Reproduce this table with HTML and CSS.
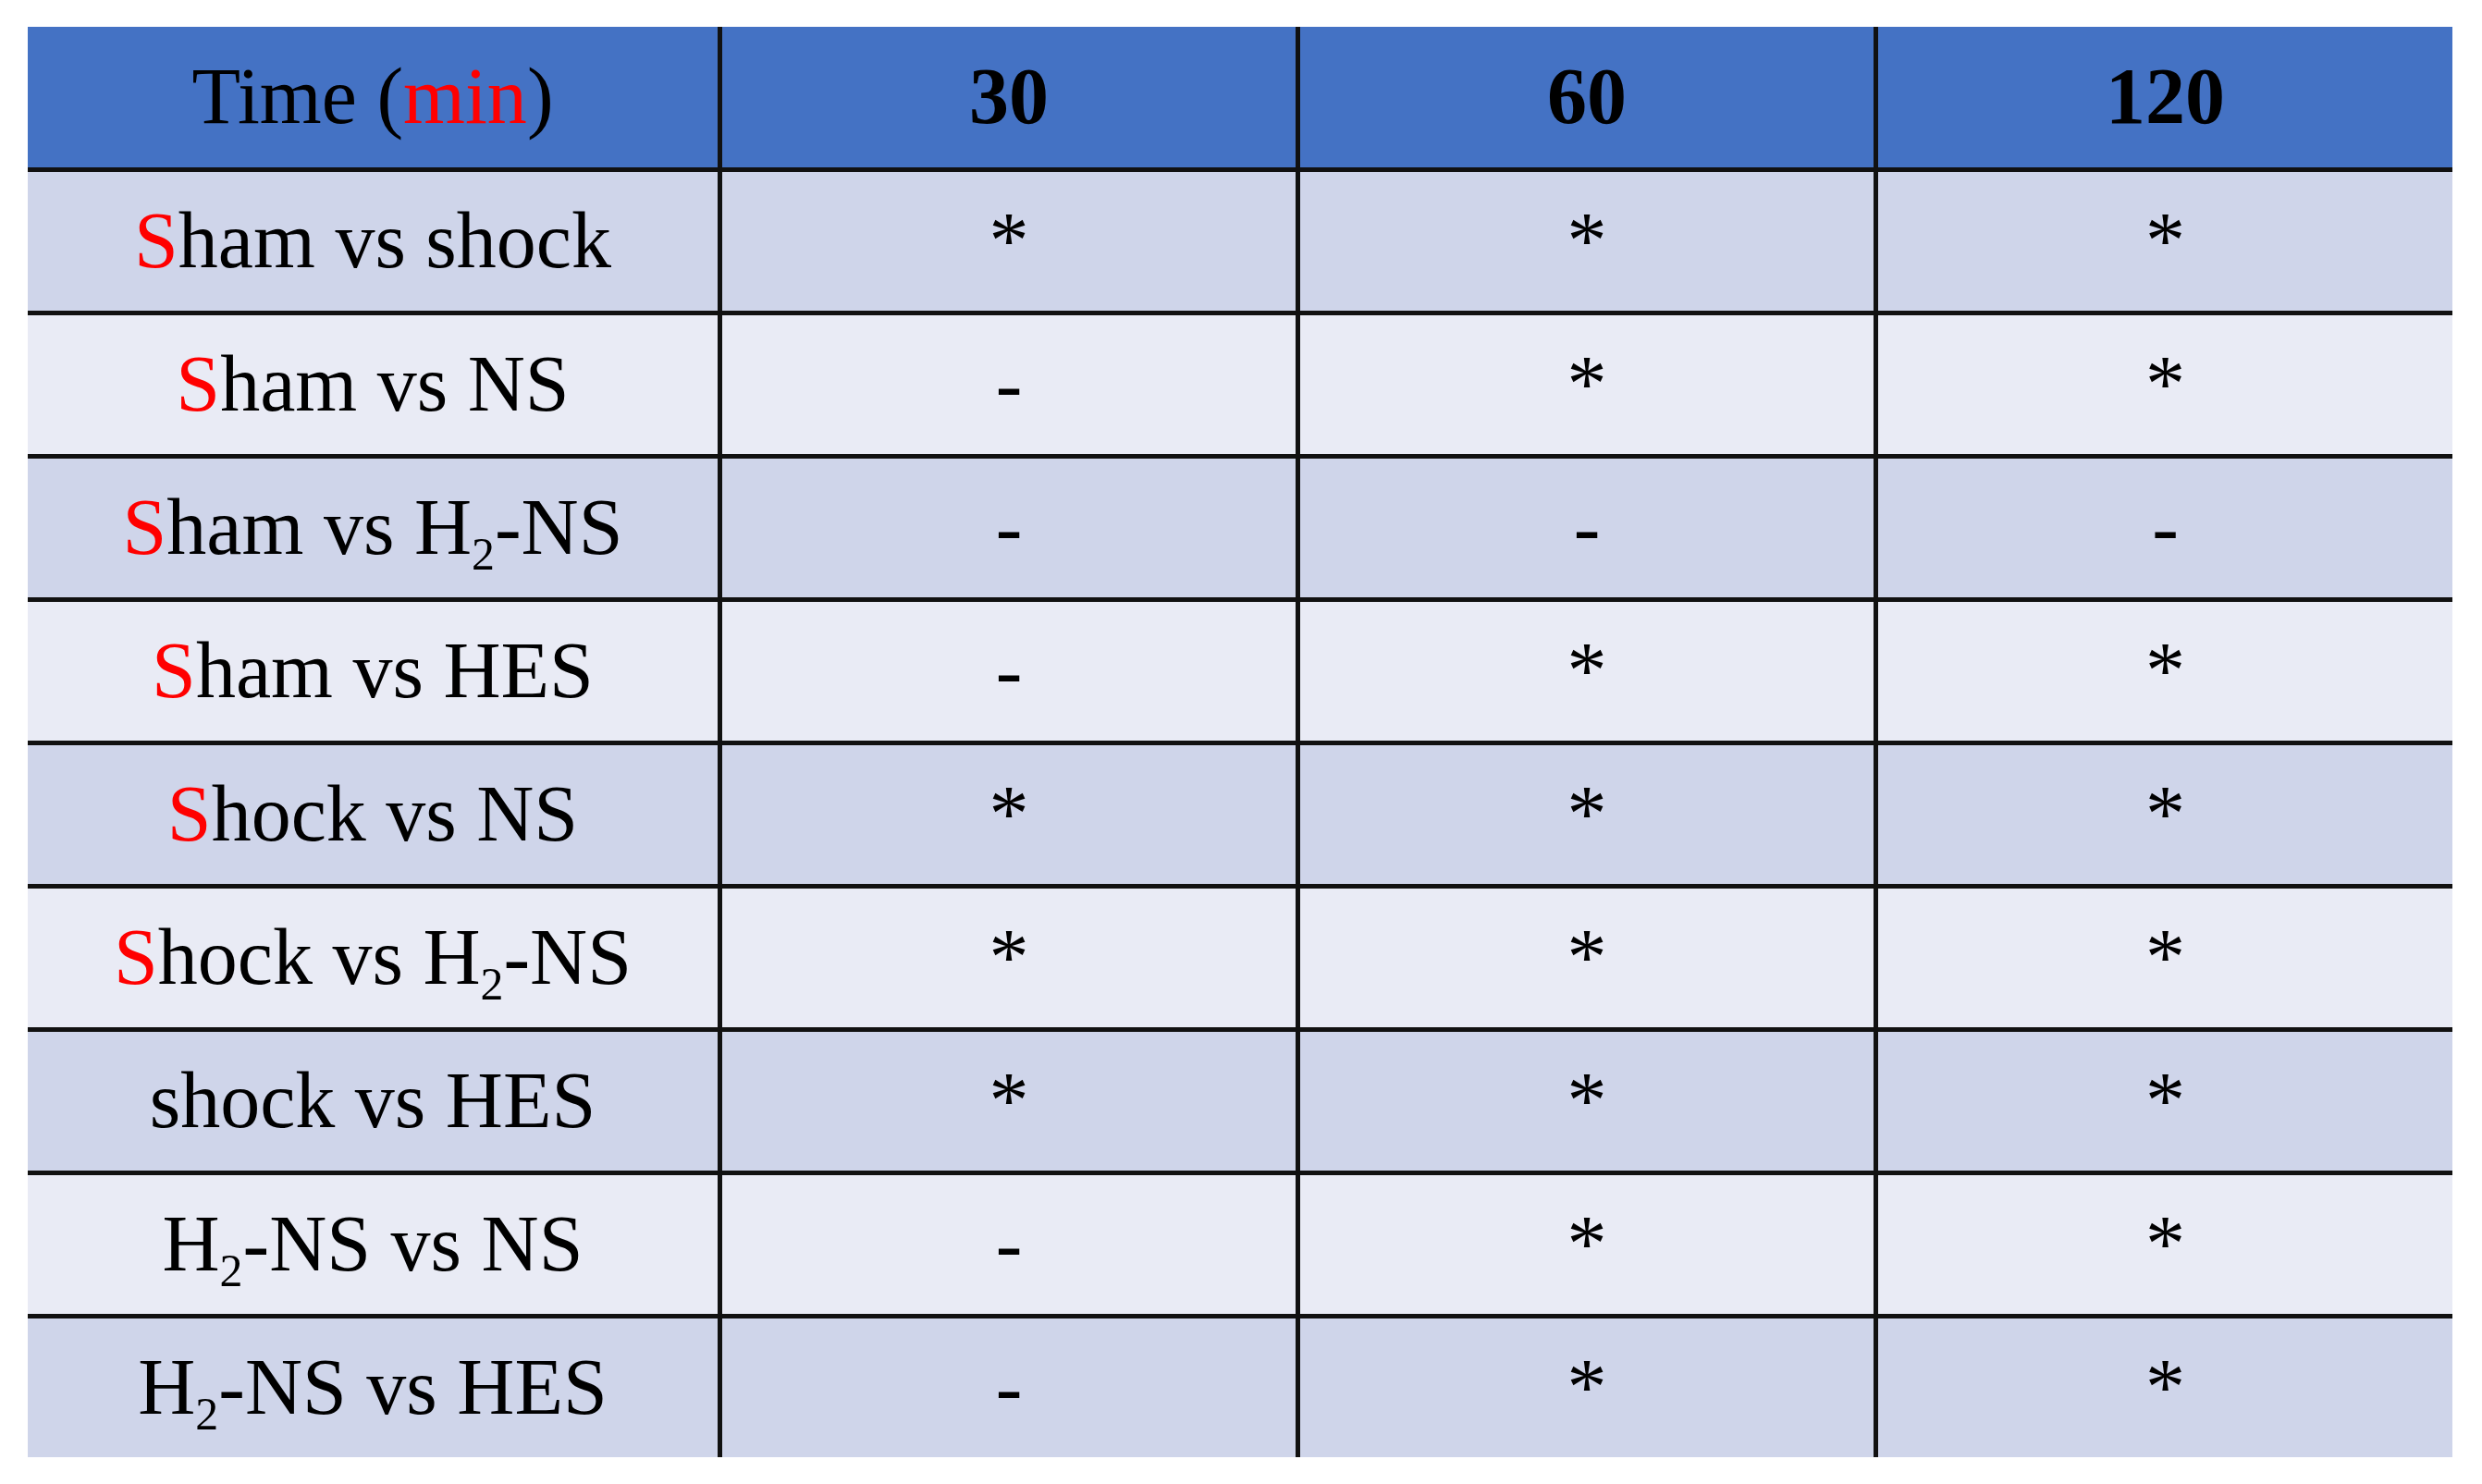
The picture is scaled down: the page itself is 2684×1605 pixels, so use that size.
FILE: index.html
```html
<!DOCTYPE html>
<html>
<head>
<meta charset="utf-8">
<link rel="stylesheet" href="styles.css">
</head>
<body>
<div class="table">
  <div class="cell head"><span class="txt">Time (<span class="red">min</span>)</span></div>
  <div class="cell head bold"><span class="txt">30</span></div>
  <div class="cell head bold"><span class="txt">60</span></div>
  <div class="cell head bold"><span class="txt">120</span></div>

  <div class="cell odd"><span class="txt"><span class="red">S</span>ham vs shock</span></div>
  <div class="cell odd"><span class="txt">*</span></div>
  <div class="cell odd"><span class="txt">*</span></div>
  <div class="cell odd"><span class="txt">*</span></div>

  <div class="cell even"><span class="txt"><span class="red">S</span>ham vs NS</span></div>
  <div class="cell even"><span class="txt">-</span></div>
  <div class="cell even"><span class="txt">*</span></div>
  <div class="cell even"><span class="txt">*</span></div>

  <div class="cell odd"><span class="txt"><span class="red">S</span>ham vs H<sub class="sub">2</sub>-NS</span></div>
  <div class="cell odd"><span class="txt">-</span></div>
  <div class="cell odd"><span class="txt">-</span></div>
  <div class="cell odd"><span class="txt">-</span></div>

  <div class="cell even"><span class="txt"><span class="red">S</span>ham vs HES</span></div>
  <div class="cell even"><span class="txt">-</span></div>
  <div class="cell even"><span class="txt">*</span></div>
  <div class="cell even"><span class="txt">*</span></div>

  <div class="cell odd"><span class="txt"><span class="red">S</span>hock vs NS</span></div>
  <div class="cell odd"><span class="txt">*</span></div>
  <div class="cell odd"><span class="txt">*</span></div>
  <div class="cell odd"><span class="txt">*</span></div>

  <div class="cell even"><span class="txt"><span class="red">S</span>hock vs H<sub class="sub">2</sub>-NS</span></div>
  <div class="cell even"><span class="txt">*</span></div>
  <div class="cell even"><span class="txt">*</span></div>
  <div class="cell even"><span class="txt">*</span></div>

  <div class="cell odd"><span class="txt">shock vs HES</span></div>
  <div class="cell odd"><span class="txt">*</span></div>
  <div class="cell odd"><span class="txt">*</span></div>
  <div class="cell odd"><span class="txt">*</span></div>

  <div class="cell even"><span class="txt">H<sub class="sub">2</sub>-NS vs NS</span></div>
  <div class="cell even"><span class="txt">-</span></div>
  <div class="cell even"><span class="txt">*</span></div>
  <div class="cell even"><span class="txt">*</span></div>

  <div class="cell odd"><span class="txt">H<sub class="sub">2</sub>-NS vs HES</span></div>
  <div class="cell odd"><span class="txt">-</span></div>
  <div class="cell odd"><span class="txt">*</span></div>
  <div class="cell odd"><span class="txt">*</span></div>
</div>
</body>
</html>
```

FILE: styles.css
```css
html, body {
  margin: 0;
  padding: 0;
  background: #ffffff;
}

body {
  padding: 29px 0 0 30px;
  font-family: "Liberation Serif", "Times New Roman", serif;
  color: #000000;
}

.table {
  display: grid;
  width: 2622px;
  grid-template-columns: 746px 620px 620px 621px;
  grid-template-rows: 152px repeat(9, 150px);
  gap: 5px;
  background: #111111;
}

.cell {
  display: flex;
  align-items: center;
  justify-content: center;
  font-size: 86px;
  line-height: 1;
  white-space: nowrap;
}

.txt {
  display: block;
  line-height: 1;
  margin-top: -2px;
}

.head {
  background: #4472c4;
}

.bold {
  font-weight: bold;
}

.odd {
  background: #cfd5ea;
}

.even {
  background: #e9ebf5;
}

.red {
  color: #ff0000;
}

.sub {
  font-size: 0.58em;
  vertical-align: -0.35em;
  line-height: 0;
}
```
